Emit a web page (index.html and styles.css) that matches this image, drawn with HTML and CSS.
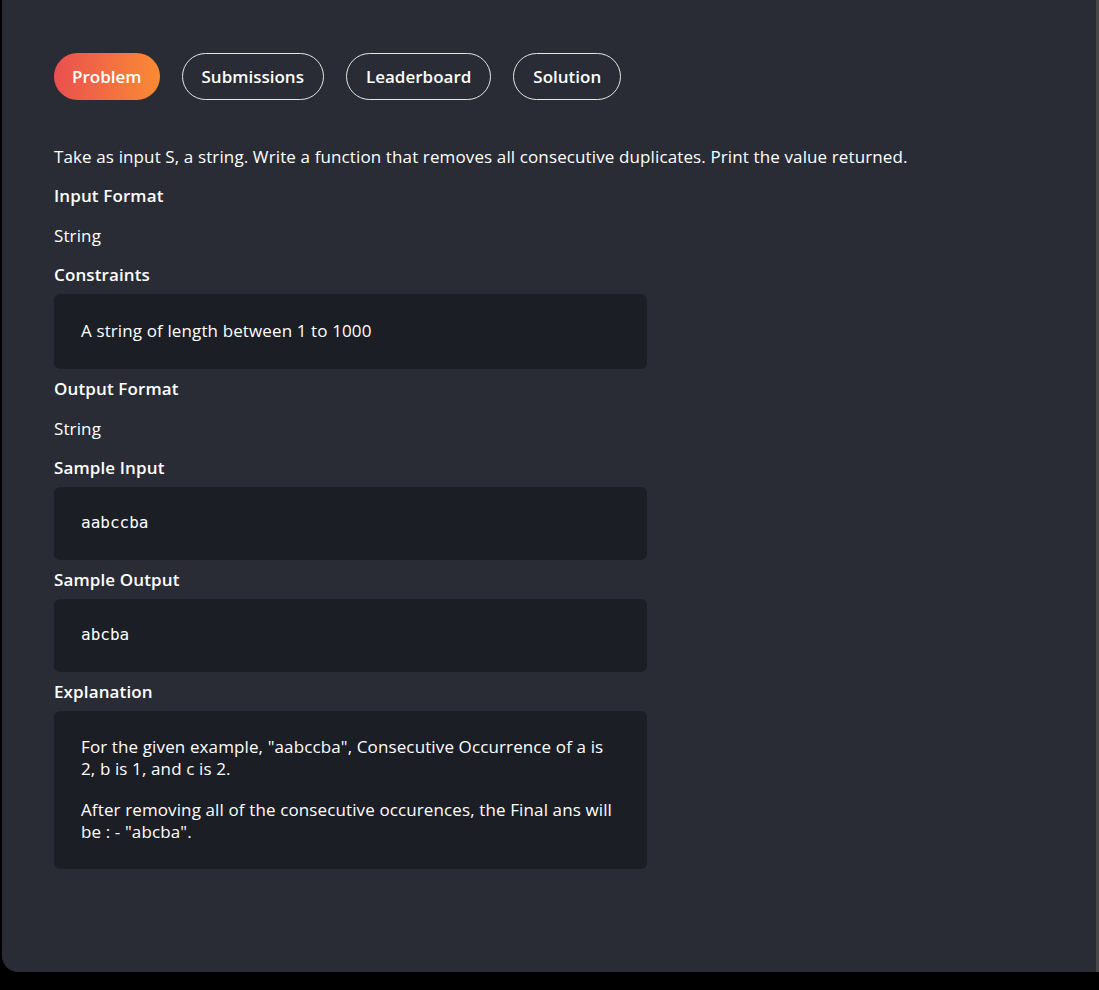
FILE: index.html
```html
<!DOCTYPE html>
<html lang="en">
<head>
<meta charset="utf-8">
<title>Problem</title>
<link rel="stylesheet" href="styles.css">
</head>
<body>
<div class="card">
  <nav class="tabs">
    <button class="tab active">Problem</button>
    <button class="tab">Submissions</button>
    <button class="tab">Leaderboard</button>
    <button class="tab">Solution</button>
  </nav>
  <div class="problem">
    <p class="desc">Take as input S, a string. Write a function that removes all consecutive duplicates. Print the value returned.</p>
    <h3 class="head">Input Format</h3>
    <p class="text">String</p>
    <h3 class="head before-box">Constraints</h3>
    <div class="box"><p class="box-text">A string of length between 1 to 1000</p></div>
    <h3 class="head">Output Format</h3>
    <p class="text">String</p>
    <h3 class="head before-box">Sample Input</h3>
    <div class="box"><div class="code">aabccba</div></div>
    <h3 class="head before-box">Sample Output</h3>
    <div class="box"><div class="code">abcba</div></div>
    <h3 class="head before-box">Explanation</h3>
    <div class="box explain">
      <p class="box-text">For the given example, "aabccba", Consecutive Occurrence of a is 2, b is 1, and c is 2.</p>
      <p class="box-text">After removing all of the consecutive occurences, the Final ans will be : - "abcba".</p>
    </div>
  </div>
</div>
</body>
</html>
```

FILE: styles.css
```css
html, body {
  margin: 0;
  padding: 0;
  background: #000;
}
body {
  font-family: "Open Sans", "Noto Sans", sans-serif;
  color: #fff;
  letter-spacing: 0.12px;
}
.card {
  margin-left: 2px;
  width: 1094px;
  height: 972px;
  box-sizing: content-box;
  background: #292c35;
  border-right: 3px solid #474747;
  border-bottom-left-radius: 16px;
  overflow: hidden;
}
.tabs {
  display: flex;
  gap: 22px;
  padding: 53px 0 0 52px;
}
.tab {
  height: 47px;
  box-sizing: border-box;
  padding: 0 19px;
  border-radius: 24px;
  border: 1px solid #e6e6e6;
  background: transparent;
  color: #fff;
  font-family: inherit;
  font-size: 17px;
  font-weight: 600;
  letter-spacing: 0;
  cursor: pointer;
}
.tab.active {
  border: none;
  padding: 0 18px;
  background: linear-gradient(90deg, #ea504f 0%, #fb8a34 100%);
}
.problem {
  padding: 46px 0 0 52px;
  display: flex;
  flex-direction: column;
  align-items: flex-start;
}
.desc, .text, .head {
  margin: 0 0 17px;
  font-size: 17px;
  line-height: 22px;
}
.head {
  font-weight: 600;
  margin-bottom: 18px;
}
.head.before-box {
  margin-bottom: 8px;
}
.box {
  width: 593px;
  box-sizing: border-box;
  background: #1c1e26;
  border-radius: 6px;
  padding: 26px 30px 27px 27px;
  margin-bottom: 9px;
}
.box-text {
  margin: 0;
  font-size: 17px;
  line-height: 22px;
}
.explain {
  padding: 25px 30px 26px 27px;
  display: flex;
  flex-direction: column;
  gap: 19px;
}
.code {
  font-family: "DejaVu Sans Mono", monospace;
  font-size: 16px;
  line-height: 20px;
  letter-spacing: 0;
  white-space: pre;
}
```
